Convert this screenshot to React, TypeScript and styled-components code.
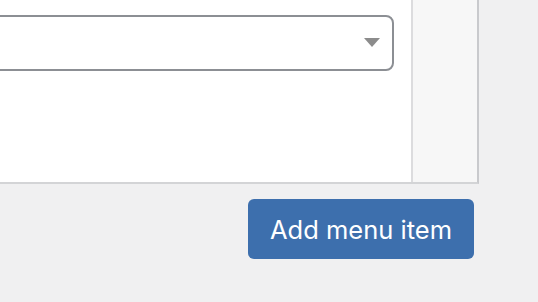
import styled, { createGlobalStyle } from "styled-components";

const GlobalStyle = createGlobalStyle`
  html, body {
    margin: 0;
    padding: 0;
    background: #f0f0f1;
    font-family: Inter, "Noto Sans", sans-serif;
  }
`;

const Page = styled.div`
  width: 538px;
  height: 302px;
  overflow: hidden;
  display: flex;
  flex-direction: column;
`;

const Panel = styled.div`
  width: 479px;
  height: 184px;
  box-sizing: border-box;
  display: flex;
  border-right: 2px solid #c9cacd;
  border-bottom: 2px solid #d3d4d6;
`;

const Main = styled.div`
  flex: 1;
  background: #ffffff;
  padding: 15px 17px 0 0;
  display: flex;
  flex-direction: column;
  overflow: hidden;
`;

const Side = styled.div`
  width: 64px;
  background: #f7f7f7;
  border-left: 2px solid #dcdcde;
`;

const Select = styled.div`
  margin-left: -20px;
  height: 56px;
  box-sizing: border-box;
  border: 2px solid #8c8f94;
  border-radius: 8px;
  background: #fff;
  display: flex;
  align-items: center;
  justify-content: flex-end;
  padding-right: 12px;
`;

const Arrow = styled.svg`
  width: 16px;
  height: 9px;
  margin-top: -2px;
`;

const Actions = styled.div`
  width: 474px;
  display: flex;
  justify-content: flex-end;
  margin-top: 15px;
`;

const Button = styled.button`
  width: 226px;
  height: 60px;
  border: none;
  border-radius: 6px;
  background: #3d6fad;
  color: #fff;
  font-family: Inter, "Noto Sans", sans-serif;
  font-size: 25.5px;
  font-weight: 400;
  padding: 0;
  cursor: pointer;
`;

export default function App() {
  return (
    <Page>
      <GlobalStyle />
      <Panel>
        <Main>
          <Select>
            <Arrow viewBox="0 0 16 9">
              <polygon points="0,0 16,0 8,9" fill="#8c8c8c" />
            </Arrow>
          </Select>
        </Main>
        <Side />
      </Panel>
      <Actions>
        <Button>Add menu item</Button>
      </Actions>
    </Page>
  );
}
